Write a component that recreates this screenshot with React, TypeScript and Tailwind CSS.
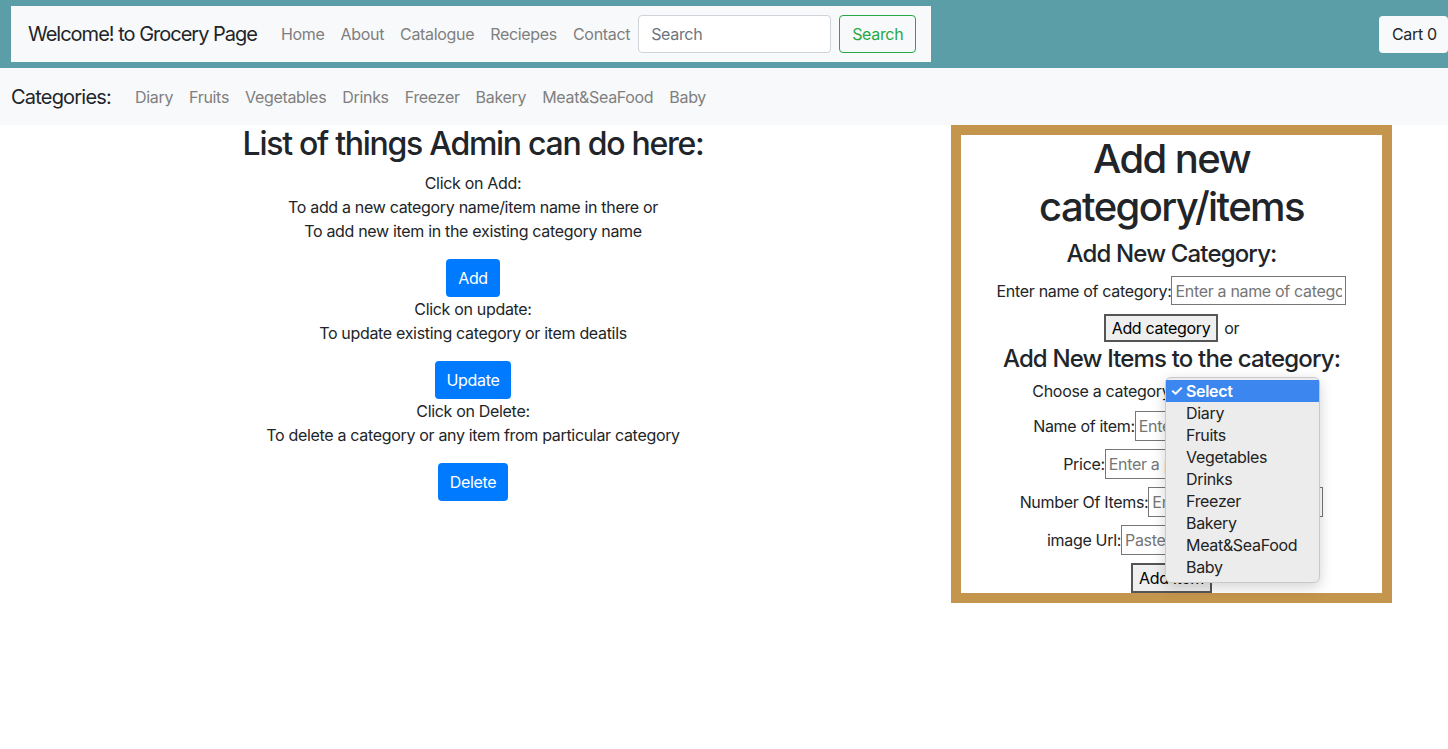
import React from 'react';

const navLinks = ['Home', 'About', 'Catalogue', 'Reciepes', 'Contact'];
const categories = ['Diary', 'Fruits', 'Vegetables', 'Drinks', 'Freezer', 'Bakery', 'Meat&SeaFood', 'Baby'];

function FieldRow({ label, placeholder, tall = true }: { label: string; placeholder: string; tall?: boolean }) {
  return (
    <div className="flex items-center justify-center whitespace-nowrap">
      <span>{label}</span>
      <input
        className={
          tall
            ? 'w-[175px] h-[30px] border border-[#767676] px-[3px] text-[16px] placeholder:text-[#757575] bg-white outline-none'
            : 'w-[175px] h-[29px] border border-[#767676] px-[3px] text-[16px] placeholder:text-[#757575] bg-white outline-none'
        }
        placeholder={placeholder}
      />
    </div>
  );
}

function NativeButton({ children, tall = false }: { children: React.ReactNode; tall?: boolean }) {
  return (
    <button
      className={
        tall
          ? 'h-[30px] px-[6px] bg-[#efefef] border-2 border-[#555] text-[16px] text-black leading-none'
          : 'h-[28px] px-[6px] bg-[#efefef] border-2 border-[#555] text-[16px] text-black leading-none'
      }
    >
      {children}
    </button>
  );
}

export default function App() {
  return (
    <div className="min-h-screen bg-white text-[#212529] text-[16px] tracking-[-0.02em] font-['Inter','Liberation_Sans',sans-serif]">
      {/* top bar */}
      <div className="h-[68px] bg-[#5b9ea7] flex items-center justify-between pl-[11px]">
        <nav className="h-[56px] w-[920px] bg-[#f8f9fa] flex items-center px-[17px] whitespace-nowrap">
          <span className="text-[20px] tracking-[-0.05em] mr-4 text-[#212529]">Welcome! to Grocery Page</span>
          <ul className="flex items-center">
            {navLinks.map((l) => (
              <li key={l} className="px-2 text-[#7f7f7f]">{l}</li>
            ))}
          </ul>
          <input
            className="mr-2 w-[193px] h-[38px] rounded-[4px] border border-[#ced4da] bg-white px-3 placeholder:text-[#6c757d] outline-none"
            placeholder="Search"
          />
          <button className="h-[38px] px-3 rounded-[4px] border border-[#28a745] text-[#28a745]">Search</button>
        </nav>
        <button className="h-[37px] w-[69px] bg-[#f8f9fa] rounded-[4px] text-left pl-[13px] text-[#212529] whitespace-nowrap">Cart 0</button>
      </div>

      {/* categories */}
      <div className="h-[57px] bg-[#f8f9fa] flex items-center pl-[11px] whitespace-nowrap">
        <span className="text-[20px] tracking-[-0.04em] mr-4">Categories:</span>
        {categories.map((c) => (
          <span key={c} className="px-2 text-[#7f7f7f]">{c}</span>
        ))}
      </div>

      {/* main */}
      <div className="flex items-start">
        <div className="w-[946px] flex flex-col items-center text-center">
          <h2 className="text-[32px] leading-[38px] tracking-[-0.04em] font-medium mb-2">List of things Admin can do here:</h2>
          <p className="leading-6 mb-4">
            Click on Add:<br />
            To add a new category name/item name in there or<br />
            To add new item in the existing category name
          </p>
          <button className="h-[38px] px-3 rounded-[4px] bg-[#007bff] text-white">Add</button>
          <p className="leading-6 mb-4">
            Click on update:<br />
            To update existing category or item deatils
          </p>
          <button className="h-[38px] px-3 rounded-[4px] bg-[#007bff] text-white">Update</button>
          <p className="leading-6 mb-4">
            Click on Delete:<br />
            To delete a category or any item from particular category
          </p>
          <button className="h-[38px] px-3 rounded-[4px] bg-[#007bff] text-white">Delete</button>
        </div>

        <div className="relative ml-[5px] w-[441px] border-[10px] border-[#c4954c] flex flex-col items-center text-center">
          <h1 className="text-[40px] leading-[48px] tracking-[-0.04em] font-medium">Add new<br />category/items</h1>
          <h4 className="mt-2 text-[24px] leading-[29px] tracking-[-0.035em] font-medium">Add New Category:</h4>
          <div className="mt-2">
            <FieldRow label="Enter name of category:" placeholder="Enter a name of category" tall={false} />
          </div>
          <div className="mt-[9px] flex items-center gap-[6px]">
            <NativeButton>Add category</NativeButton>
            <span>or</span>
          </div>
          <h4 className="mt-[2px] text-[24px] leading-[29px] tracking-[-0.035em] font-medium whitespace-nowrap">Add New Items to the category:</h4>
          <div className="mt-[5px] h-[25px] flex items-center whitespace-nowrap">
            <span>Choose a category:</span>
            <select className="w-[136px] h-[22px] text-[14px] border border-[#767676] rounded-[3px] bg-white">
              <option>Select</option>
            </select>
          </div>
          <div className="mt-2 flex flex-col gap-2">
            <FieldRow label="Name of item:" placeholder="Enter a name of item" />
            <FieldRow label="Price:" placeholder="Enter a price" />
            <FieldRow label="Number Of Items:" placeholder="Enter number of items" />
            <FieldRow label="image Url:" placeholder="Paste image url" />
          </div>
          <div className="mt-2 h-[30px]">
            <NativeButton tall>Add item</NativeButton>
          </div>

          {/* opened select menu */}
          <div className="absolute left-[204px] top-[242px] w-[155px] h-[206px] bg-[#ececec] border border-[#c9c9c9] rounded-[6px] shadow-[0_4px_14px_rgba(0,0,0,0.18)] pt-[2px] text-left">
            <div className="h-[22px] bg-[#3b87ef] text-white flex items-center font-semibold">
              <span className="w-[20px] pl-[4px] text-[15px]">✓</span>
              <span>Select</span>
            </div>
            {categories.map((c) => (
              <div key={c} className="h-[22px] flex items-center pl-[20px] text-[#222]">{c}</div>
            ))}
          </div>
        </div>
      </div>
    </div>
  );
}
